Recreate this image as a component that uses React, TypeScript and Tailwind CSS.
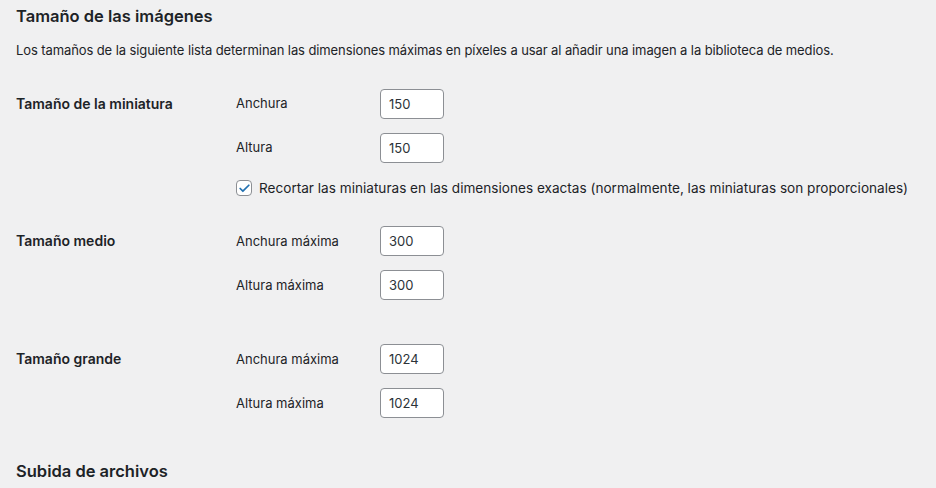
import { Check } from 'lucide-react';

function SizeField({ label, value }: { label: string; value: string }) {
  return (
    <div className="flex items-center h-[30px]">
      <label className="w-[144px] shrink-0">{label}</label>
      <input
        type="text"
        defaultValue={value}
        readOnly
        className="w-16 h-[30px] px-2 rounded border border-[#8c8f94] bg-white text-[13px] text-[#2c3338] outline-none"
      />
    </div>
  );
}

export default function App() {
  return (
    <div
      className="min-h-[488px] bg-[#f0f0f1] text-[#1d2327] text-[13px] px-4"
      style={{ fontFamily: 'Inter, "Noto Sans", sans-serif' }}
    >
      <h2 className="text-[16.5px] font-semibold leading-6 pt-[4px]">Tamaño de las imágenes</h2>
      <p className="mt-[14px] leading-4 tracking-[-0.1px]">
        Los tamaños de la siguiente lista determinan las dimensiones máximas en píxeles a usar al añadir una imagen a la biblioteca de medios.
      </p>

      {/* Miniatura */}
      <div className="flex mt-[31px]">
        <div className="w-[220px] shrink-0 text-[14px] font-semibold pt-[7px] leading-4">Tamaño de la miniatura</div>
        <div className="flex flex-col gap-[14px]">
          <SizeField label="Anchura" value="150" />
          <SizeField label="Altura" value="150" />
          <label className="flex items-center gap-[7px] mt-[1px]">
            <span className="w-4 h-4 rounded-[4px] border border-[#8c8f94] bg-white flex items-center justify-center">
              <Check className="w-[13px] h-[13px] text-[#2271b1]" strokeWidth={3.2} />
            </span>
            <span className="text-[13.6px]">Recortar las miniaturas en las dimensiones exactas (normalmente, las miniaturas son proporcionales)</span>
          </label>
        </div>
      </div>

      {/* Medio */}
      <div className="flex mt-[28px]">
        <div className="w-[220px] shrink-0 text-[14px] font-semibold pt-[7px] leading-4">Tamaño medio</div>
        <div className="flex flex-col gap-[14px]">
          <SizeField label="Anchura máxima" value="300" />
          <SizeField label="Altura máxima" value="300" />
        </div>
      </div>

      {/* Grande */}
      <div className="flex mt-[44px]">
        <div className="w-[220px] shrink-0 text-[14px] font-semibold pt-[7px] leading-4">Tamaño grande</div>
        <div className="flex flex-col gap-[14px]">
          <SizeField label="Anchura máxima" value="1024" />
          <SizeField label="Altura máxima" value="1024" />
        </div>
      </div>

      <h2 className="text-[16.5px] font-semibold leading-6 mt-[41px]">Subida de archivos</h2>
    </div>
  );
}
